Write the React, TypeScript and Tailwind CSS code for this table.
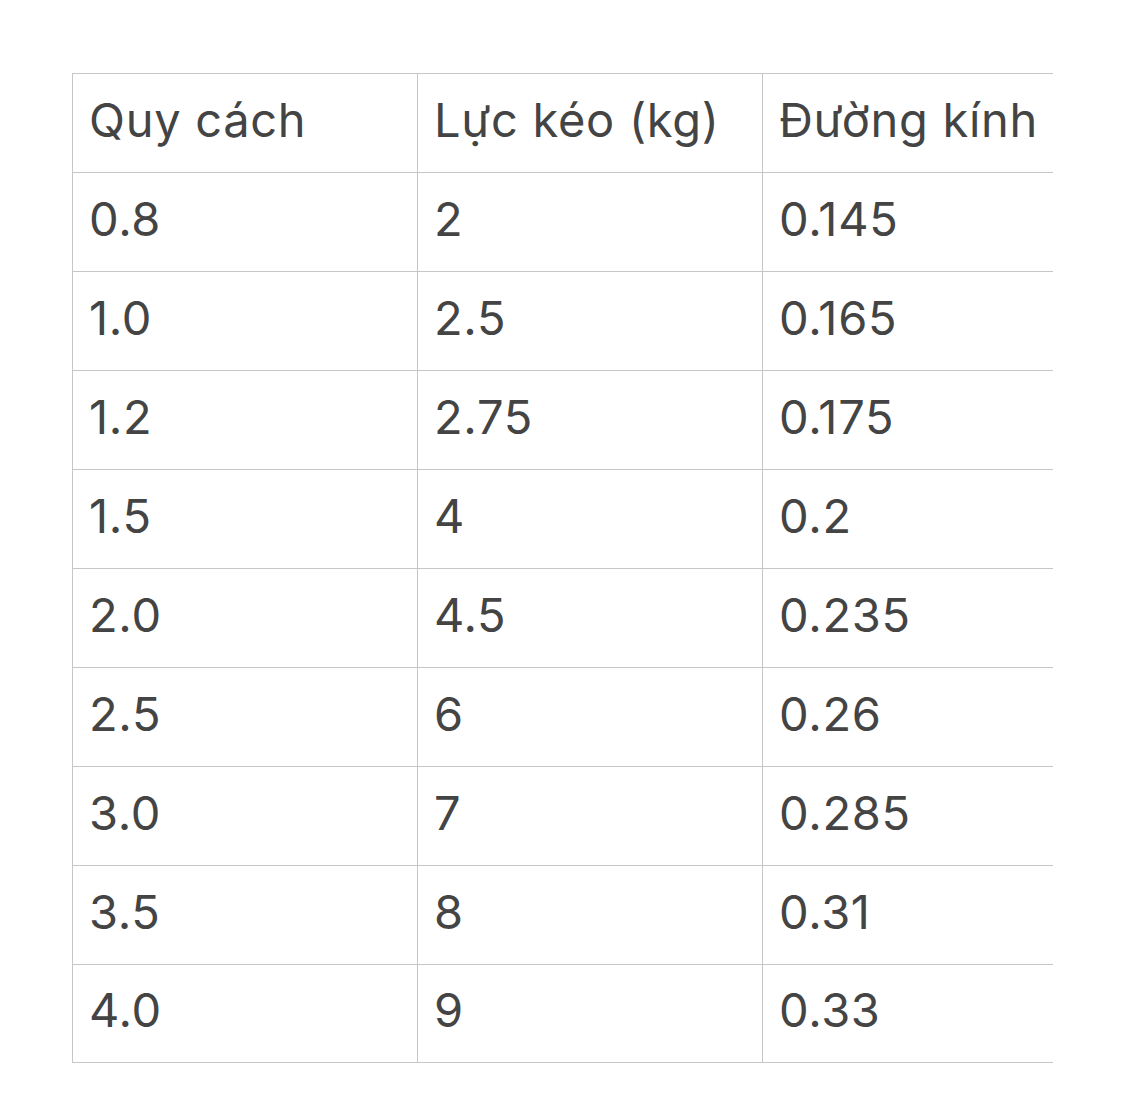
import React from "react";

const rows: [string, string, string][] = [
  ["Quy cách", "Lực kéo (kg)", "Đường kính"],
  ["0.8", "2", "0.145"],
  ["1.0", "2.5", "0.165"],
  ["1.2", "2.75", "0.175"],
  ["1.5", "4", "0.2"],
  ["2.0", "4.5", "0.235"],
  ["2.5", "6", "0.26"],
  ["3.0", "7", "0.285"],
  ["3.5", "8", "0.31"],
  ["4.0", "9", "0.33"],
];

export default function App() {
  return (
    <div
      className="w-[1125px] h-[1113px] bg-white pt-[73px] pl-[72px]"
      style={{ fontFamily: "Inter, 'Noto Sans', sans-serif" }}
    >
      {/* table is cut off on the right */}
      <div className="w-[981px] overflow-hidden">
        <div className="grid grid-cols-[345px_345px_345px] w-[1035px]">
          {rows.map((row, r) =>
            row.map((cell, c) => (
              <div
                key={`${r}-${c}`}
                className={`h-[99px] border-l border-t border-[#c6c6c6] pl-[16px] pb-2 flex items-center text-[47px] leading-none tracking-[0.7px] text-[#444444] whitespace-nowrap ${
                  r === rows.length - 1 ? "border-b" : ""
                }`}
              >
                {cell}
              </div>
            ))
          )}
        </div>
      </div>
    </div>
  );
}
